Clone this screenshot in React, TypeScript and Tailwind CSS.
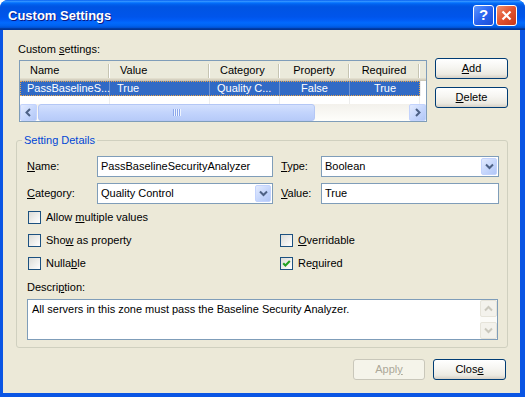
import React from "react";

const font = { fontFamily: '"Liberation Sans", Arial, sans-serif' };

const U = ({ children }: { children: React.ReactNode }) => (
  <span className="underline decoration-1 underline-offset-[1px]">{children}</span>
);

type Dir = "up" | "down" | "left" | "right";

const Chevron = ({ dir, color = "#4D6185" }: { dir: Dir; color?: string }) => {
  const pts = {
    down: "1,2.5 4.5,6 8,2.5",
    up: "1,6.5 4.5,3 8,6.5",
    left: "6,1 2.5,4.5 6,8",
    right: "3,1 6.5,4.5 3,8",
  }[dir];
  return (
    <svg width="9" height="9" viewBox="0 0 9 9">
      <polyline points={pts} fill="none" stroke={color} strokeWidth="2" />
    </svg>
  );
};

const ScrollBtn = ({ dir, disabled }: { dir: Dir; disabled?: boolean }) =>
  disabled ? (
    <div className="flex h-[17px] w-[17px] items-center justify-center rounded-[2px] border border-[#E6E4DA] bg-[#F3F2EC]">
      <Chevron dir={dir} color="#CAC8BD" />
    </div>
  ) : (
    <div className="flex h-[17px] w-[17px] items-center justify-center rounded-[2px] border border-[#C3D3FD] bg-[linear-gradient(135deg,#E3EBFE,#C5D6FC_55%,#B2C7F7)]">
      <Chevron dir={dir} />
    </div>
  );

const XpButton = ({
  children,
  disabled,
  className = "",
}: {
  children: React.ReactNode;
  disabled?: boolean;
  className?: string;
}) => (
  <div
    className={`flex h-[21px] items-center justify-center rounded-[3px] border ${
      disabled
        ? "border-[#C9C7BA] bg-[#F5F4EA] text-[#ACA899]"
        : "border-[#003C74] bg-[linear-gradient(180deg,#FFFFFF_0%,#F6F5F1_45%,#ECEAE2_80%,#D6D0C5_100%)] text-black"
    } ${className}`}
  >
    {children}
  </div>
);

const Checkbox = ({ checked }: { checked?: boolean }) => (
  <span className="flex h-[13px] w-[13px] shrink-0 items-center justify-center border border-[#1C5180] bg-[linear-gradient(135deg,#DCDCD7,#FFFFFF)]">
    {checked && (
      <svg width="9" height="9" viewBox="0 0 9 9">
        <polyline points="1.2,4.2 3.4,6.5 7.8,2" fill="none" stroke="#21A121" strokeWidth="2" />
      </svg>
    )}
  </span>
);

const TextBox = ({ value, className = "" }: { value: string; className?: string }) => (
  <div className={`flex h-[21px] items-center border border-[#7F9DB9] bg-white pl-[3px] ${className}`}>
    {value}
  </div>
);

const Combo = ({ value, className = "" }: { value: string; className?: string }) => (
  <div className={`flex h-[21px] items-center border border-[#7F9DB9] bg-white ${className}`}>
    <span className="flex-1 pl-[3px]">{value}</span>
    <div className="m-[1px] flex h-[17px] w-[16px] items-center justify-center rounded-[2px] border border-[#C3D3FD] bg-[linear-gradient(135deg,#E3EBFE,#C5D6FC_55%,#B2C7F7)]">
      <Chevron dir="down" />
    </div>
  </div>
);

const HeaderCell = ({ label, className, center }: { label: string; className: string; center?: boolean }) => (
  <div className={`flex h-full items-center pb-[1px] ${className}`}>
    <span className={center ? "flex-1 text-center" : "flex-1 pl-[10px]"}>{label}</span>
    <span className="h-[14px] w-[2px] border-l border-r border-l-[#C7C5B2] border-r-white" />
  </div>
);

const ListView = () => (
  <div className="ml-[1px] mt-[4px] flex h-[62px] w-[408px] flex-col overflow-hidden border border-[#7F9DB9] bg-white">
    <div className="flex h-[20px] shrink-0 bg-[#EBEADB] shadow-[inset_0_-1px_0_#CBC7B8,inset_0_-2px_0_#D6D2C2,inset_0_-3px_0_#E2DECD]">
      <HeaderCell label="Name" className="w-[90px]" />
      <HeaderCell label="Value" className="w-[100px]" />
      <HeaderCell label="Category" className="w-[70px]" />
      <HeaderCell label="Property" className="w-[70px]" center />
      <HeaderCell label="Required" className="w-[70px]" center />
    </div>
    <div className="flex h-[15px] shrink-0">
      <div className="flex w-[400px] bg-[#316AC5] text-white outline-1 -outline-offset-1 outline-dotted outline-[#E9A54A]">
        <span className="w-[90px] border-r border-[#6C93D4] pl-[7px] leading-[15px]">PassBaselineS...</span>
        <span className="w-[100px] border-r border-[#6C93D4] pl-[7px] leading-[15px]">True</span>
        <span className="w-[70px] border-r border-[#6C93D4] pl-[7px] leading-[15px]">Quality C...</span>
        <span className="w-[70px] border-r border-[#6C93D4] text-center leading-[15px]">False</span>
        <span className="w-[70px] text-center leading-[15px]">True</span>
      </div>
      <span className="border-l border-[#EDEDED]" />
    </div>
    <div className="flex flex-1">
      <span className="w-[90px] border-r border-[#EDEDED]" />
      <span className="w-[100px] border-r border-[#EDEDED]" />
      <span className="w-[70px] border-r border-[#EDEDED]" />
      <span className="w-[70px] border-r border-[#EDEDED]" />
      <span className="w-[70px] border-r border-[#EDEDED]" />
    </div>
    <div className="flex h-[17px] shrink-0 bg-[linear-gradient(180deg,#F3F1EC,#FEFEFB)]">
      <ScrollBtn dir="left" />
      <div className="flex flex-1 pl-[1px]">
        <div className="flex w-[277px] items-center justify-center gap-[1px] rounded-[3px] border border-[#B4C7F5] bg-[linear-gradient(180deg,#D3E0FD,#C3D4FC_50%,#B7CBF9)]">
          <span className="h-[7px] w-[1px] bg-[#8DA8EC] shadow-[1px_0_0_#EEF4FE]" />
          <span className="h-[7px] w-[1px] bg-[#8DA8EC] shadow-[1px_0_0_#EEF4FE]" />
          <span className="h-[7px] w-[1px] bg-[#8DA8EC] shadow-[1px_0_0_#EEF4FE]" />
          <span className="h-[7px] w-[1px] bg-[#8DA8EC] shadow-[1px_0_0_#EEF4FE]" />
        </div>
      </div>
      <ScrollBtn dir="right" />
    </div>
  </div>
);

const CheckRow = ({ checked, children }: { checked?: boolean; children: React.ReactNode }) => (
  <div className="flex items-center">
    <Checkbox checked={checked} />
    <span className="ml-[5px] leading-[13px]">{children}</span>
  </div>
);

export default function App() {
  return (
    <div className="h-[397px] w-[525px] bg-white text-[11px] text-black" style={font}>
      <div className="flex h-full flex-col rounded-t-[8px] bg-[#0A55E4]">
        {/* title bar */}
        <div className="flex h-[30px] shrink-0 items-center rounded-t-[8px] bg-[linear-gradient(180deg,#0058EE_0%,#3593FF_4%,#288EFF_6%,#127DFF_8%,#036FFC_10%,#0262EE_14%,#0057E5_20%,#0054E3_24%,#0055EB_56%,#005BF5_66%,#026AFE_76%,#0062EF_86%,#0052D6_92%,#0040AB_94%,#003092_100%)]">
          <span className="ml-[8px] mt-[2px] text-[13px] font-bold text-white [text-shadow:1px_1px_#0A1883]">
            Custom Settings
          </span>
          <div className="ml-auto mr-[8px] flex gap-[2px]">
            <div className="flex h-[21px] w-[21px] items-center justify-center rounded-[3px] border border-white bg-[linear-gradient(135deg,#5E96FF,#2A64F0_50%,#1C4FD8)] text-[15px] font-bold text-white">
              ?
            </div>
            <div className="flex h-[21px] w-[21px] items-center justify-center rounded-[3px] border border-white bg-[linear-gradient(135deg,#F0906E,#E2522E_50%,#C8371A)]">
              <svg width="11" height="11" viewBox="0 0 11 11">
                <path d="M1.5 1.5 L9.5 9.5 M9.5 1.5 L1.5 9.5" stroke="white" strokeWidth="2.2" />
              </svg>
            </div>
          </div>
        </div>

        {/* client */}
        <div className="mb-[4px] ml-[3px] mr-[5px] flex flex-1 flex-col bg-[#ECE9D8]">
          <div className="flex">
            <div className="ml-[15px] mt-[13px] flex flex-col">
              <div className="leading-[13px]">
                Custom <U>s</U>ettings:
              </div>
              <ListView />
            </div>
            <div className="ml-[8px] mt-[28px] flex flex-col gap-[8px]">
              <XpButton className="w-[73px]">
                <U>A</U>dd
              </XpButton>
              <XpButton className="w-[73px]">
                <U>D</U>elete
              </XpButton>
            </div>
          </div>

          {/* group box */}
          <div className="ml-[13px] mt-[18px] flex w-[492px] flex-col rounded-[3px] border border-[#D0D0BF] pb-[7px]">
            <div className="-mt-[7px] ml-[5px] w-fit bg-[#ECE9D8] px-[2px] leading-[13px] text-[#0046D5]">
              Setting Details
            </div>

            <div className="mt-[9px] flex h-[21px] items-center">
              <span className="ml-[10px] w-[70px]">
                <U>N</U>ame:
              </span>
              <TextBox value="PassBaselineSecurityAnalyzer" className="w-[176px]" />
              <span className="ml-[8px] w-[40px]">
                <U>T</U>ype:
              </span>
              <Combo value="Boolean" className="w-[178px]" />
            </div>

            <div className="mt-[6px] flex h-[21px] items-center">
              <span className="ml-[10px] w-[70px]">
                <U>C</U>ategory:
              </span>
              <Combo value="Quality Control" className="w-[176px]" />
              <span className="ml-[8px] w-[40px]">
                <U>V</U>alue:
              </span>
              <TextBox value="True" className="w-[178px]" />
            </div>

            <div className="ml-[11px] mt-[7px] flex">
              <CheckRow>
                Allow <U>m</U>ultiple values
              </CheckRow>
            </div>
            <div className="ml-[11px] mt-[10px] flex">
              <div className="w-[252px]">
                <CheckRow>
                  Sho<U>w</U> as property
                </CheckRow>
              </div>
              <CheckRow>
                <U>O</U>verridable
              </CheckRow>
            </div>
            <div className="ml-[11px] mt-[10px] flex">
              <div className="w-[252px]">
                <CheckRow>
                  Nulla<U>b</U>le
                </CheckRow>
              </div>
              <CheckRow checked>
                Re<U>q</U>uired
              </CheckRow>
            </div>

            <div className="ml-[10px] mt-[11px] leading-[13px]">
              Descri<U>p</U>tion:
            </div>
            <div className="ml-[10px] mt-[5px] flex h-[41px] w-[471px] border border-[#7F9DB9] bg-white">
              <span className="flex-1 pl-[4px] pt-[3px] leading-[13px]">
                All servers in this zone must pass the Baseline Security Analyzer.
              </span>
              <div className="flex w-[17px] flex-col justify-between bg-[#FBFBF8]">
                <ScrollBtn dir="up" disabled />
                <ScrollBtn dir="down" disabled />
              </div>
            </div>
          </div>

          <div className="mr-[14px] mt-[11px] flex justify-end gap-[8px]">
            <XpButton disabled className="w-[72px]">
              Appl<U>y</U>
            </XpButton>
            <XpButton className="w-[73px]">
              Clos<U>e</U>
            </XpButton>
          </div>
        </div>
      </div>
    </div>
  );
}
